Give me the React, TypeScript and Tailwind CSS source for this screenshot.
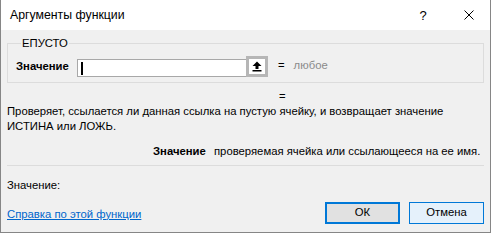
import React from "react";

const font = { fontFamily: '"Liberation Sans", Arial, sans-serif' };

function UpArrowIcon() {
  return (
    <svg width="10" height="11" viewBox="0 0 10 11" aria-hidden="true">
      <path d="M5 0.5 L9.5 5 H6.5 V8 H3.5 V5 H0.5 Z" fill="#000" />
      <rect x="0.5" y="9" width="9" height="1.5" fill="#000" />
    </svg>
  );
}

function CloseIcon() {
  return (
    <svg width="10" height="10" viewBox="0 0 10 10" aria-hidden="true">
      <path d="M0.5 0.5 L9.5 9.5 M9.5 0.5 L0.5 9.5" stroke="#000" strokeWidth="1" fill="none" />
    </svg>
  );
}

export default function App() {
  return (
    <div
      className="w-[491px] h-[233px] flex flex-col border-x border-b border-[#868686] bg-[#f0f0f0] text-[11.3px] text-black overflow-hidden whitespace-nowrap"
      style={font}
    >
      {/* title bar */}
      <div className="h-[30px] shrink-0 bg-white flex items-center pl-[9px]">
        <span className="text-[12.3px] leading-none">Аргументы функции</span>
        <span className="ml-auto w-[10px] text-center text-[13px] leading-none">?</span>
        <span className="ml-[36px] mr-[16px] flex items-center">
          <CloseIcon />
        </span>
      </div>

      <div className="flex-1 flex flex-col px-[6px]">
        {/* argument group */}
        <fieldset className="mt-[5px] border border-[#dcdcdc] h-[48px] pl-[8px]">
          <legend className="ml-[5px] px-[1px] leading-[16px]">ЕПУСТО</legend>
          <div className="flex items-end h-[23px] mt-[3px]">
            <span className="w-[61px] font-bold leading-[18px] self-center">Значение</span>
            <div className="w-[170px] h-[18px] border border-[#a8a8a8] bg-white flex items-center pl-[3px]">
              <span className="w-[2px] h-[13px] bg-black" />
            </div>
            <button className="w-[22px] h-[21px] border-[3px] border-[#b6b6b6] bg-white flex items-center justify-center -ml-[1px]">
              <UpArrowIcon />
            </button>
            <span className="ml-[10px] self-center leading-[15px]">=</span>
            <span className="ml-[9px] self-center leading-[15px] text-[#8a8a8a]">любое</span>
          </div>
        </fieldset>

        <div className="mt-[6px] leading-[15px] pl-[272px]">=</div>
        <p className="leading-[15px]">
          Проверяет, ссылается ли данная ссылка на пустую ячейку, и возвращает значение
          <br />
          ИСТИНА или ЛОЖЬ.
        </p>

        <div className="mt-[10px] flex leading-[15px] pl-[146px]">
          <span className="w-[61px] shrink-0 font-bold">Значение</span>
          <span>проверяемая ячейка или ссылающееся на ее имя.</span>
        </div>

        <div className="mt-[6px] h-px shrink-0 bg-[#dcdcdc]" />

        <div className="mt-[12px] leading-[15px]">Значение:</div>

        <div className="mt-[9px] flex items-center">
          <a href="#" className="text-[#0066cc] underline leading-[15px] mt-[2px]">
            Справка по этой функции
          </a>
          <button className="ml-auto w-[75px] h-[22px] border-2 border-[#0078d7] bg-[#e1e1e1] leading-none">
            ОК
          </button>
          <button className="ml-[9px] w-[75px] h-[22px] border border-[#0078d7] bg-[#e5f1fb] leading-none">
            Отмена
          </button>
        </div>
      </div>
    </div>
  );
}
